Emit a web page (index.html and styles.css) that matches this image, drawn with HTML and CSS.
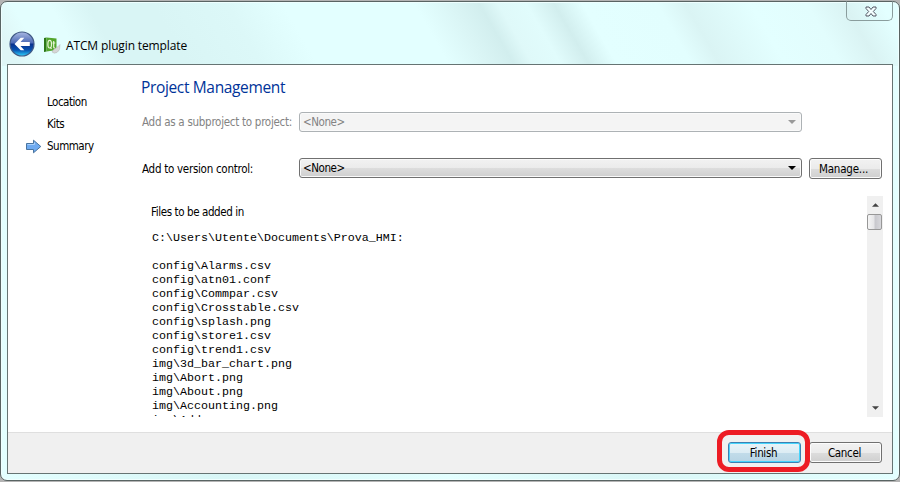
FILE: index.html
```
<!DOCTYPE html>
<html lang="en">
<head>
<meta charset="utf-8">
<title>ATCM plugin template</title>
<link rel="stylesheet" href="styles.css">
</head>
<body>
<div class="window">
  <header class="titlebar">
    <svg class="back" viewBox="0 0 26 26" aria-label="Back">
      <defs>
        <linearGradient id="orb" x1="0" y1="0" x2="0" y2="1">
          <stop offset="0" stop-color="#a9b8e2"/><stop offset=".46" stop-color="#4a68b4"/>
          <stop offset=".5" stop-color="#08308c"/><stop offset=".75" stop-color="#0752b0"/><stop offset="1" stop-color="#2fd4ff"/>
        </linearGradient>
      </defs>
      <circle cx="13" cy="13" r="12" fill="url(#orb)" stroke="#405985" stroke-width="1.2"/>
      <path d="M5.500 13l6.200-6.200h3.600l-3.800 4.200h9.300v4h-9.300l3.800 4.200h-3.600z" fill="#fff"/>
    </svg>
    <svg class="logo" viewBox="0 0 17 17" aria-hidden="true">
      <path d="M0 1L2.500 .5V14.500L0 15z" fill="#2b7717"/>
      <path d="M2.500 .5L12.500 1.500V13L2.500 14.500z" fill="#53a52c"/>
      <path d="M5.700 3.400q-1.800 0-1.800 3.800t1.800 3.800q1.800 0 1.800-3.800t-1.800-3.800M6.300 10l1.200 2M9.700 4v6q0 1 1.200.8M8.500 6h2.800" fill="none" stroke="#e8f5d8" stroke-width="1.200"/>
      <path d="M16 7.500q.5 6-3 8-3 1.500-5-.5 1-3 4.500-4.500 2-.8 3.500-3z" fill="#d6d6d6" stroke="#aaa" stroke-width=".4"/>
    </svg>
    <h1 class="title">ATCM plugin template</h1>
    <button class="close" aria-label="Close">
      <svg viewBox="0 0 12 11"><path d="M1 1H4L6 3.500 8 1H11V2.500L8.300 5.500 11 8.500V10H8L6 7.500 4 10H1V8.500L3.700 5.500 1 2.500z" fill="#f5ffff" stroke="#525563"/></svg>
    </button>
  </header>
  <section class="client">
    <div class="page">
      <nav class="steps">
        <div class="step">Location</div>
        <div class="step">Kits</div>
        <div class="step current">
          <svg class="arrow" viewBox="0 0 17 15"><path d="M1.500 4.500H8.500V1.200L15.800 7.500 8.500 13.800V10.500H1.500z" fill="#6eaaf0" stroke="#49749f"/><path d="M2.500 5.500H9.500V3.500" fill="none" stroke="#a8d0fb"/></svg>Summary
        </div>
      </nav>
      <main class="content">
        <h2 class="heading">Project Management</h2>
        <div class="row off">
          <label class="label">Add as a subproject to project:</label>
          <div class="combo disabled"><span>&lt;None&gt;</span><svg class="caret" viewBox="0 0 8 4"><path d="M0 0H8L4 4z"/></svg></div>
        </div>
        <div class="row vcs">
          <label class="label">Add to version control:</label>
          <div class="combo"><span>&lt;None&gt;</span><svg class="caret" viewBox="0 0 8 4"><path d="M0 0H8L4 4z"/></svg></div>
          <button class="button manage">Manage...</button>
        </div>
        <div class="files">
          <div class="listing">
            <p class="intro">Files to be added in</p>
<pre class="paths">C:\Users\Utente\Documents\Prova_HMI:

config\Alarms.csv
config\atn01.conf
config\Commpar.csv
config\Crosstable.csv
config\splash.png
config\store1.csv
config\trend1.csv
img\3d_bar_chart.png
img\Abort.png
img\About.png
img\Accounting.png
img\Add.png</pre>
          </div>
          <div class="scrollbar">
            <svg class="tip" viewBox="0 0 8 4"><path d="M0 4H8L4 0z"/></svg>
            <div class="thumb"></div>
            <svg class="tip end" viewBox="0 0 8 4"><path d="M0 0H8L4 4z"/></svg>
          </div>
        </div>
      </main>
    </div>
    <footer class="footer">
      <button class="button default">Finish</button>
      <button class="button">Cancel</button>
      <div class="marker"></div>
    </footer>
  </section>
</div>
</body>
</html>
```
FILE: styles.css
```
* { box-sizing: border-box; }
body {
  margin: 0;
  width: 900px;
  height: 482px;
  padding: 1px 0;
  overflow: hidden;
  background: #b4b4b4;
  font: 11.5px/14px "DejaVu Sans Condensed", "DejaVu Sans", sans-serif;
  font-stretch: condensed;
  letter-spacing: -.33px;
  color: #000;
}
svg { display: block; }
h1, h2, p, pre { margin: 0; font-weight: normal; }
button { font: inherit; letter-spacing: inherit; color: inherit; padding: 0; }
.window {
  height: 480px;
  padding: 0 6px;
  border: 1px solid #596463;
  border-radius: 7px;
  background:
    linear-gradient(60deg, #dff6f6 0, #dff6f6 2%, #e3fefe 5%, #e3fefe 9%, #d9f5f5 13%, #d9f5f5 20%, #dcf8f8 28%, #e3ffff 34%, #e3ffff 48%, #daf5f5 52%, #d2eeee 55%, #dff9f9 57%, #e1fcfc 60%, #d2eeee 63%, #e3ffff 66%, #e2fefe 74%, #daf4f4 77%, #e3ffff 84%, #e2fdfd 90%, #daf3f3 94%, #e3ffff 98%) 0 0 / 100% 64px no-repeat,
    linear-gradient(90deg, #e3ffff, #d8f6f6 25%, #e3ffff 50%, #daf7f7 70%, #e3ffff);
  box-shadow: inset 0 0 0 1px #efffff;
}
.titlebar { position: relative; display: flex; height: 62px; padding: 29px 0 0 2px; align-items: flex-start; }
.back { width: 26px; height: 26px; }
.logo { width: 17px; height: 17px; margin: 6px 0 0 9px; }
.title { margin: 5px 0 0 5px; font: 12px/20px "Open Sans", "Noto Sans", sans-serif; letter-spacing: -.13px; }
.close {
  position: absolute; top: -1px; right: 0;
  display: flex; justify-content: center; align-items: center;
  width: 47px; height: 20px;
  border: 1px solid #8a9d9d; border-top-color: #596463; border-radius: 0 0 5px 5px;
  background: transparent;
}
.close svg { width: 12px; height: 11px; margin-left: 2px; }
.client { height: 410px; border: 1px solid #667473; background: #fff; }
.page { display: flex; height: 367px; }
.steps { width: 133px; padding: 30px 0 0 39px; }
.step { height: 22px; line-height: 15px; letter-spacing: -.5px; }
.current { display: flex; }
.arrow { width: 17px; height: 15px; margin: 0 5px 0 -22px; }
.content { flex: 1; padding-right: 9px; }
.heading { height: 47px; padding-top: 10px; color: #003399; font: 15.5px/24px "Open Sans", "Noto Sans", sans-serif; letter-spacing: -.35px; }
.row { display: flex; padding-left: 1px; }
.label { width: 157px; line-height: 21px; white-space: nowrap; letter-spacing: -.28px; }
.vcs .label { line-height: 22px; }
.off { height: 46px; color: #838383; }
.vcs { height: 38px; }
.combo {
  display: flex; justify-content: space-between; align-items: center;
  width: 503px; height: 20px; padding: 0 5px 0 3px;
  border: 1px solid #707070; border-radius: 3px;
  background: linear-gradient(#f2f2f2, #ebebeb 50%, #dddddd 50%, #cfcfcf);
  box-shadow: inset 0 0 0 1px #fafafa;
  letter-spacing: -.45px;
}
.disabled { border-color: #adb2b5; background: #f4f4f4; }
.caret { width: 8px; height: 4px; fill: #000; }
.disabled .caret { fill: #999; }
.button {
  width: 73px; height: 21px; padding: 1px 2px 0 0;
  border: 1px solid #707070; border-radius: 3px;
  background: linear-gradient(#f2f2f2, #ebebeb 50%, #dddddd 50%, #cfcfcf);
  box-shadow: inset 0 0 0 1px #fcfcfc;
}
.manage { margin-left: 7px; padding-right: 4px; letter-spacing: -.2px; }
.files { display: flex; justify-content: space-between; height: 221px; }
.listing { padding: 9px 0 0 11px; overflow: hidden; }
.intro { margin: 0 0 12px -1px; letter-spacing: -.4px; }
.paths { font: 11.67px/14px "Liberation Mono", monospace; letter-spacing: 0; }
.scrollbar { display: flex; flex-direction: column; align-items: center; width: 16px; padding: 7px 0; background: #f0f0f0; }
.tip { width: 7px; height: 4px; fill: #444; }
.end { margin-top: auto; }
.thumb { width: 15px; height: 16px; margin: 7px 1px 0 0; border: 1px solid #979797; border-radius: 2px; background: linear-gradient(90deg, #f5f5f5, #e5e5e7 45%, #c8c8cd 55%, #d8d8dc); }
.footer { position: relative; display: flex; gap: 8px; height: 41px; justify-content: flex-end; padding: 9px 10px 0 0; border-top: 1px solid #dfdfdf; background: #f0f0f0; }
.default { border-color: #3c7fb1; background: linear-gradient(#eaf3f8, #dcecf4 50%, #c2dcea 50%, #b7d4e4); box-shadow: inset 0 0 0 1px #46d4fc; }
.marker { position: absolute; left: 709px; top: -3px; width: 93px; height: 42px; border: 5px solid #ed1c24; border-radius: 12px; }
```
